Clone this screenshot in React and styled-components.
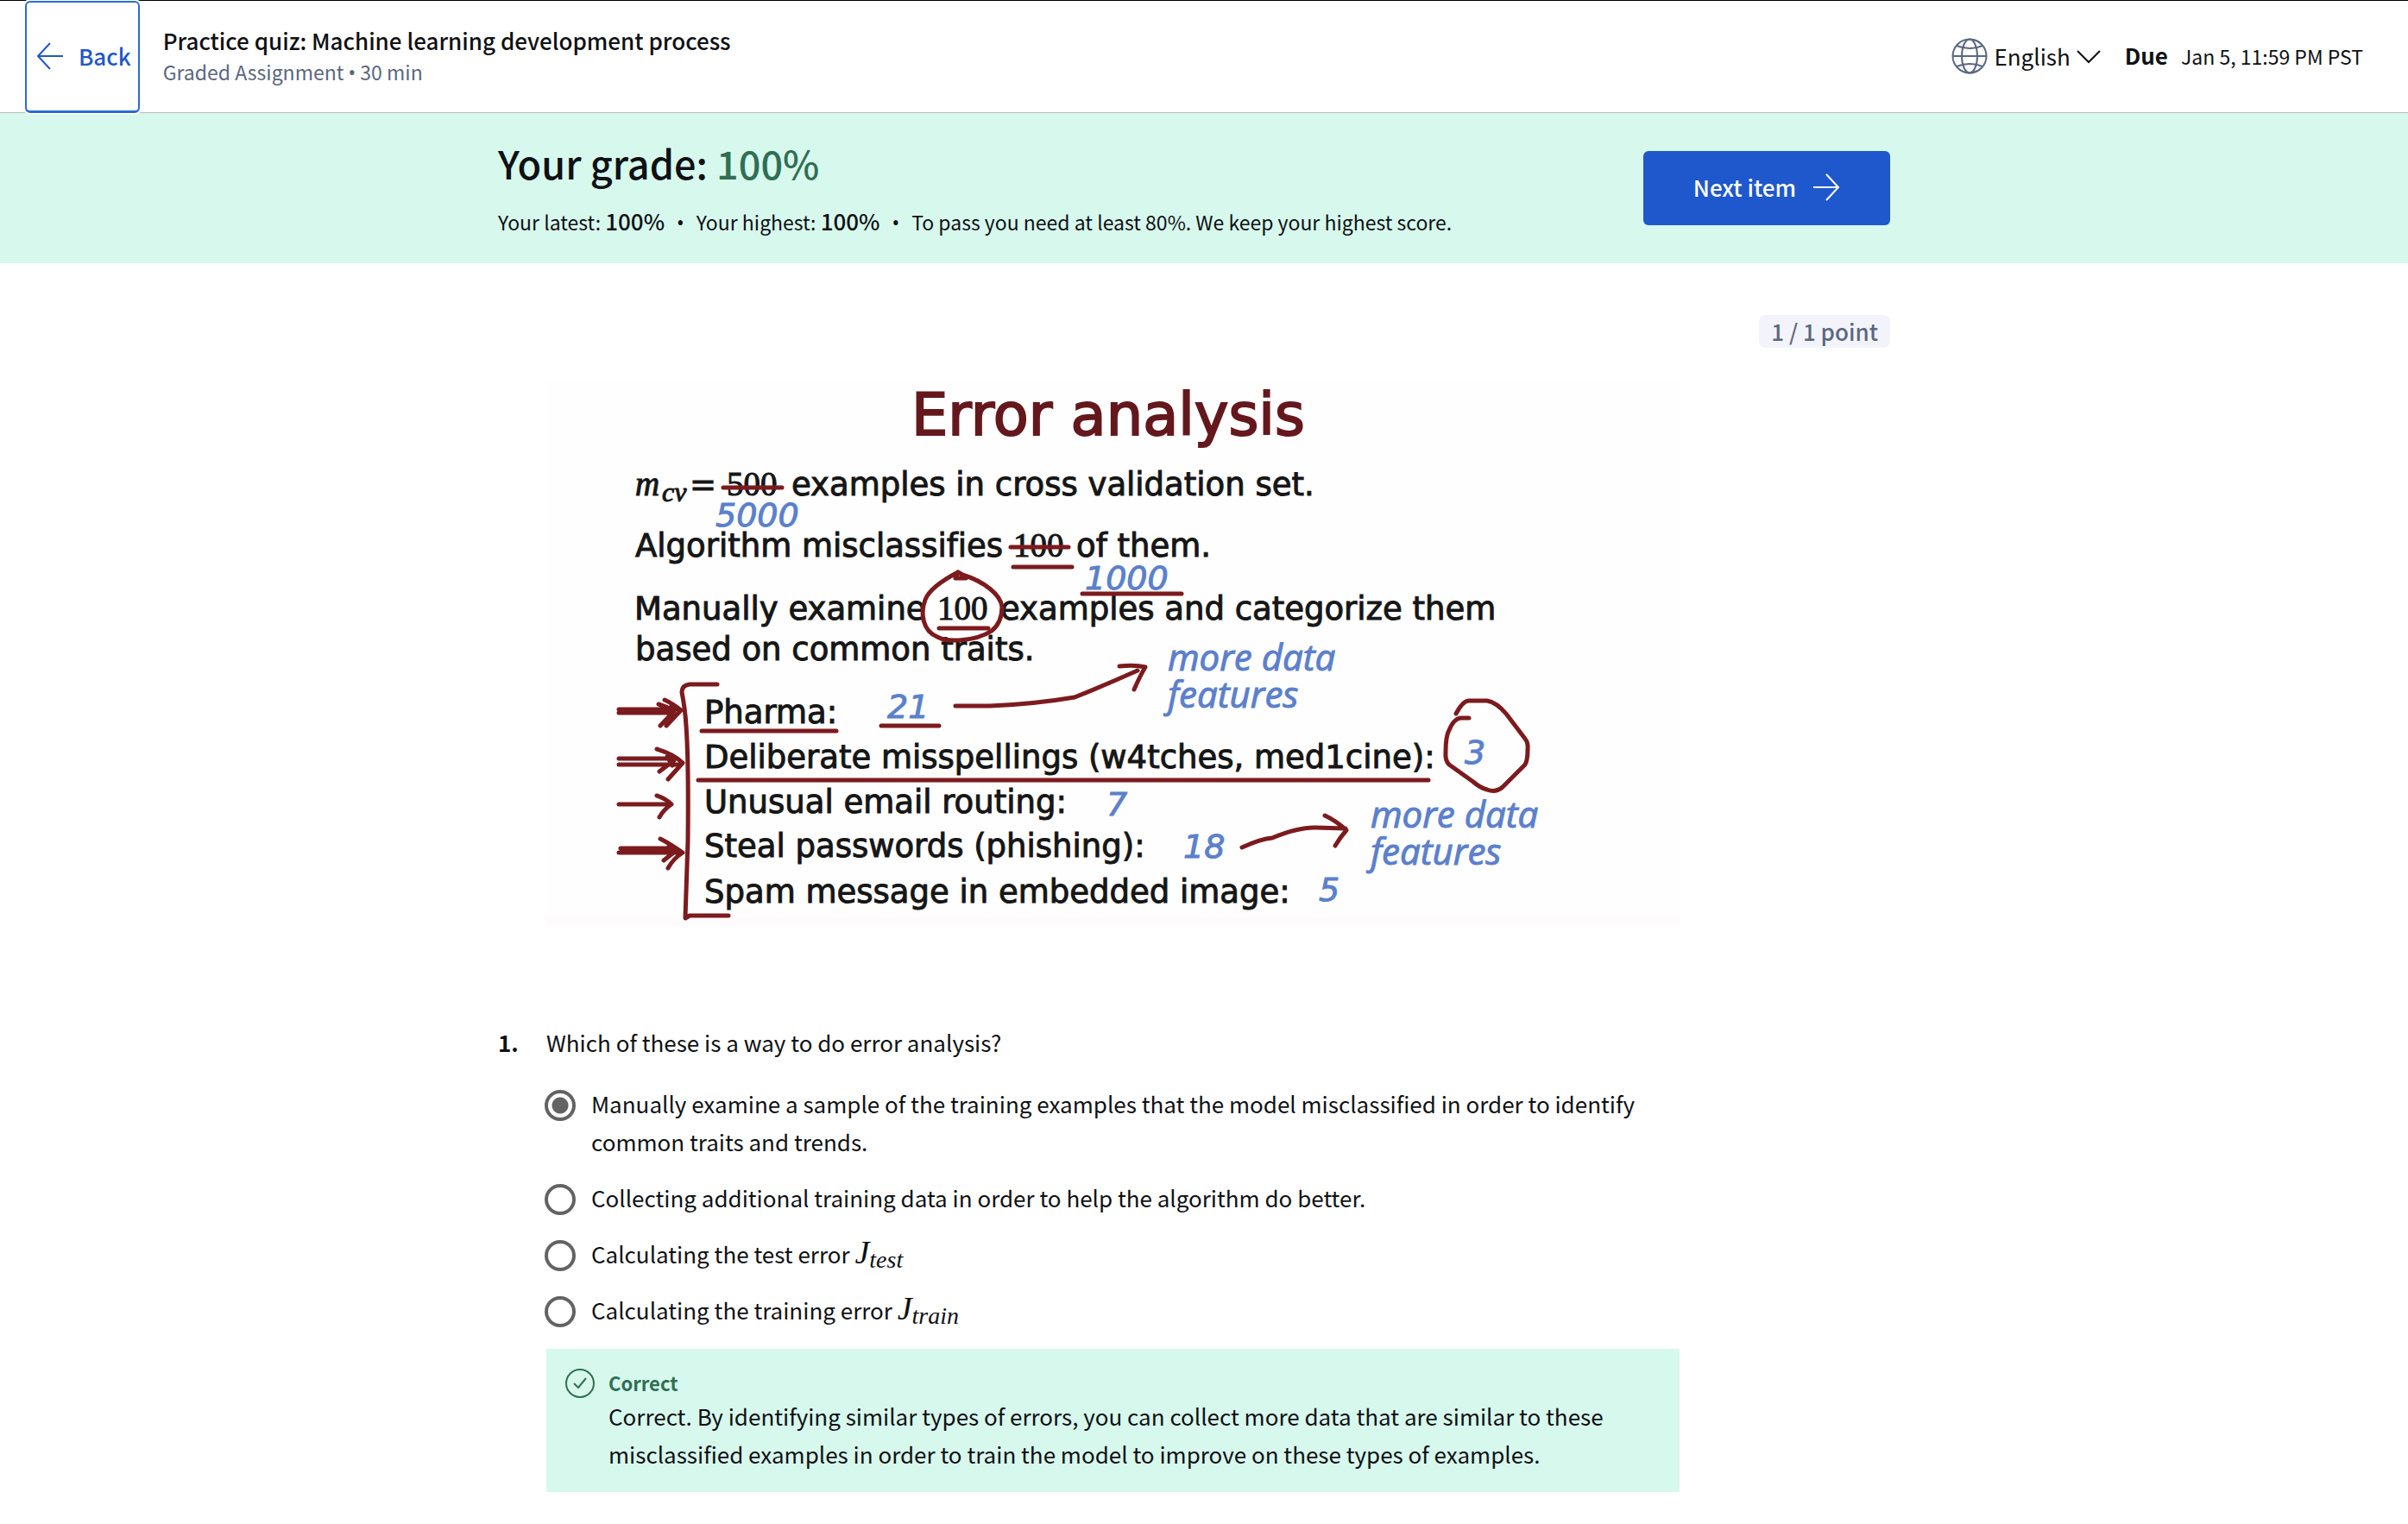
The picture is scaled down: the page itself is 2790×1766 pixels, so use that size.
import React, { useState } from "react";
import styled, { createGlobalStyle } from "styled-components";

const sans = `"Noto Sans CJK SC", "Noto Sans", sans-serif`;
const ink = "#0f1114";
const slate = "#5b6780";
const blue = "#1f58cc";
const mint = "#d7f8ed";
const green = "#2f6f53";

const GlobalStyle = createGlobalStyle`
  * { box-sizing: border-box; }
  body { margin: 0; background: #fff; color: ${ink}; font-family: ${sans}; font-size: 26px; line-height: 44px; }
  h1, h2, p, figure, fieldset { margin: 0; padding: 0; border: 0; font-weight: 400; }
  button, select { font: inherit; color: inherit; }
`;

const Header = styled.header`
  display: flex;
  align-items: center;
  min-height: 131px;
  padding: 0 52px 0 29px;
  border-top: 1px solid #000;
  box-shadow: inset 0 -1px #bbb;
`;

const BackButton = styled.button`
  position: relative;
  align-self: stretch;
  display: flex;
  align-items: center;
  gap: 17px;
  padding: 0 8px 2px 11px;
  border: 2px solid #2a6bd6;
  border-bottom-width: 3px;
  border-radius: 6px;
  background: #fff;
  box-shadow: 0 0 0 2px #fff;
  color: ${blue};
  font-weight: 500;
`;

const Heading = styled.div`
  flex: 1;
  padding: 0 0 3px 27px;
`;

const QuizTitle = styled.h1`
  font-size: 26px;
  line-height: 36px;
  font-weight: 500;
`;

const QuizMeta = styled.p`
  font-size: 23px;
  line-height: 36px;
  color: ${slate};
`;

const Bullet = styled.span`
  margin: 0 ${(p) => (p.$wide ? 14 : 0)}px;
  font-family: "Noto Sans", sans-serif;
  line-height: 1;
`;

const Tools = styled.div`
  display: flex;
  align-items: center;
  gap: 28px;
  padding-bottom: 3px;
`;

const Language = styled.label`
  display: flex;
  align-items: center;
  gap: 7px;
`;

const LanguageSelect = styled.select`
  appearance: none;
  field-sizing: content;
  padding: 0;
  border: 0;
  background: none;
`;

const Due = styled.p`
  display: flex;
  align-items: baseline;
  gap: 15px;
  font-size: 23px;
`;

const Strong = styled.strong`
  font-size: 26px;
  line-height: 1;
  font-weight: ${(p) => (p.$heavy ? 700 : 500)};
`;

const Banner = styled.section`
  padding: 30px 23px 30px 0;
  background: ${mint};
`;

const Container = styled.div`
  display: flex;
  flex-direction: ${(p) => (p.$column ? "column" : "row")};
  align-items: ${(p) => (p.$column ? "stretch" : "center")};
  justify-content: space-between;
  max-width: 1613px;
  margin: 0 auto;
`;

const Grade = styled.h2`
  margin-bottom: 22px;
  font-size: 45px;
  line-height: 56px;
  font-weight: 500;
`;

const GradeValue = styled.span`
  color: ${green};
`;

const Scores = styled.p`
  font-size: 23px;
  line-height: 36px;
`;

const NextButton = styled.button`
  display: flex;
  align-items: center;
  gap: 19px;
  padding: 20px 58px 22px;
  border: 0;
  border-radius: 6px;
  background: ${blue};
  color: #fff;
  font-weight: 500;
`;

const Main = styled.main`
  padding: 60px 23px 36px 0;
`;

const Points = styled.p`
  align-self: flex-end;
  padding: 0 14px;
  border-radius: 8px;
  background: #f3f4fb;
  color: ${slate};
  line-height: 38px;
  font-weight: 500;
`;

const Body = styled.div`
  margin: 0 244px 0 56px;
`;

const Slide = styled.figure`
  margin: 38px 0 113px;
  background: #fefefe;
  svg { display: block; width: 100%; height: auto; }
`;

const Question = styled.fieldset`
  min-width: 0;
`;

const Prompt = styled.legend`
  display: flex;
  margin: 0 0 27px -56px;
  padding: 0;
`;

const Number = styled.span`
  width: 56px;
  font-weight: 700;
`;

const Options = styled.div`
  display: grid;
  gap: 21px;
  margin-bottom: 23px;
`;

const Option = styled.label`
  display: flex;
  align-items: flex-start;
  gap: 18px;
  margin-left: -2px;
`;

const Radio = styled.input`
  appearance: none;
  flex: none;
  width: 36px;
  height: 36px;
  margin: 6px 0 0;
  border: 4px solid #636363;
  border-radius: 50%;
  background: #fff;
  &:checked { background: radial-gradient(circle, #636363 9px, #fff 10px); }
`;

const MathVar = styled.i`
  font-family: "Liberation Serif", serif;
  font-size: 38px;
  line-height: 1;
  sub { font-size: 28px; line-height: 1; vertical-align: -5px; }
`;

const Feedback = styled.section`
  display: flex;
  gap: 16px;
  padding: 22px;
  background: ${mint};
`;

const StatusIcon = styled.div`
  flex: none;
  margin-top: 1px;
  color: ${green};
  svg { display: block; }
`;

const Verdict = styled.h2`
  font-size: 22px;
  line-height: 34px;
  font-weight: 700;
  color: ${green};
`;

const Icon = ({ size = 32, width = 2, children, viewBox = "0 0 32 32" }) => (
  <svg width={size} height={size} viewBox={viewBox} fill="none" stroke="currentColor" strokeWidth={width} aria-hidden="true">
    {children}
  </svg>
);

const GlobeIcon = styled.svg`
  color: ${slate};
`;

const Printed = styled.g`
  font-family: "DejaVu Sans", sans-serif;
  font-size: 37px;
  font-variant-ligatures: none;
  fill: #161616;
  stroke: #161616;
  stroke-width: 1;
`;

const Serif = styled.g`
  font-family: "Liberation Serif", serif;
  font-size: 39px;
  fill: #161616;
  stroke: #161616;
  stroke-width: 1;
`;

const Written = styled.g`
  font-family: "Open Sans", "Noto Sans", sans-serif;
  font-style: italic;
  font-size: 42px;
  fill: #5b80cc;
  stroke: #5b80cc;
  stroke-width: 1;
`;

const WrittenNumber = styled.g`
  font-family: "DejaVu Sans", sans-serif;
  font-style: oblique;
  font-size: 38px;
  fill: #5b80cc;
  stroke: #5b80cc;
  stroke-width: 1;
`;

const Marker = styled.g`
  fill: none;
  stroke: #7c1b1e;
  stroke-width: 5;
  stroke-linecap: round;
  stroke-linejoin: round;
`;

const SlideTitle = styled.text`
  font-family: "DejaVu Sans", sans-serif;
  font-size: 67px;
  fill: #64181d;
  stroke: #64181d;
  stroke-width: 2;
`;

function ErrorAnalysisSlide() {
  return (
    <svg viewBox="0 0 1313 632" role="img" aria-label="Error analysis slide">
      <rect y="622" width="1313" height="10" fill="#fdfbfc" />
      <SlideTitle x="423" y="63">Error analysis</SlideTitle>
      <Serif>
        <text x="103" y="133" fontStyle="italic">m</text>
        <text x="134" y="140" fontStyle="italic" fontSize="32">cv</text>
        <text x="209" y="133">500</text>
        <text x="541" y="204">100</text>
        <text x="453" y="277">100</text>
      </Serif>
      <Printed>
        <text x="166" y="133">=</text>
        <text x="284" y="133">examples in cross validation set.</text>
        <text x="103" y="204">Algorithm misclassifies</text>
        <text x="614" y="204">of them.</text>
        <text x="102" y="277">Manually examine</text>
        <text x="526" y="277">examples and categorize them</text>
        <text x="103" y="324">based on common traits.</text>
        <text x="183" y="397">Pharma:</text>
        <text x="183" y="449">Deliberate misspellings (w4tches, med1cine):</text>
        <text x="183" y="501">Unusual email routing:</text>
        <text x="183" y="552">Steal passwords (phishing):</text>
        <text x="183" y="605">Spam message in embedded image:</text>
      </Printed>
      <WrittenNumber>
        <text x="196" y="169">5000</text>
        <text x="624" y="242">1000</text>
        <text x="395" y="391">21</text>
        <text x="1064" y="444">3</text>
        <text x="649" y="504">7</text>
        <text x="738" y="553">18</text>
        <text x="895" y="603">5</text>
      </WrittenNumber>
      <Written>
        <text x="720" y="336">more data</text>
        <text x="720" y="379">features</text>
        <text x="955" y="518">more data</text>
        <text x="955" y="561">features</text>
      </Written>
      <Marker>
        <path d="M205 124H273M538 193H605M541 216H609M621 247H736" />
        <path d="M455 287H512M180 406H336M388 400H455M176 463H1022" />
        <path d="M477 222C458 232 443 243 439 254C433 270 436 290 453 297C462 302 470 301 478 301C494 300 507 296 516 290C526 282 528 272 528 262C526 248 508 233 482 225L477 222L474 229H486" />
        <path d="M198 352H166Q157 353 157 361Q161 382 162 400Q165 440 164 533L161 623L166 620H211" />
        <path d="M84 381H150M84 385H146M137 370Q146 374 156 382L139 400M130 375Q140 378 148 383L132 400M145 376L146 392" />
        <path d="M84 438H148M84 445H154M128 427Q148 433 158 443L141 462M131 453L148 440M140 436L146 446" />
        <path d="M84 491H144M128 481Q138 484 145 491Q136 497 131 506" />
        <path d="M86 542H148M84 547H156M132 531Q142 536 158 547Q147 554 141 565M136 556L150 545M142 540L146 548" />
        <path d="M474 377H514Q565 375 612 367Q640 356 685 336M664 331Q682 329 694 332Q688 342 681 358" />
        <path d="M806 541Q828 531 841 530Q870 518 890 518L926 519M902 504Q915 510 927 521Q920 529 914 539" />
        <path d="M1054 386Q1062 371 1069 371H1090Q1101 373 1112 386L1134 415Q1138 420 1137 428Q1137 440 1134 445L1108 471Q1100 478 1090 474Q1082 472 1074 465L1046 445Q1041 440 1042 430Q1042 412 1046 405Q1052 391 1060 391H1069" />
      </Marker>
    </svg>
  );
}

const options = [
  "Manually examine a sample of the training examples that the model misclassified in order to identify common traits and trends.",
  "Collecting additional training data in order to help the algorithm do better.",
  <>Calculating the test error <MathVar>J<sub>test</sub></MathVar></>,
  <>Calculating the training error <MathVar>J<sub>train</sub></MathVar></>,
];

export default function App() {
  const [selected, setSelected] = useState(0);
  return (
    <>
      <GlobalStyle />
      <Header>
        <BackButton type="button">
          <Icon><path d="M31 16H2M16 1L2 16L16 31" /></Icon>
          Back
        </BackButton>
        <Heading>
          <QuizTitle>Practice quiz: Machine learning development process</QuizTitle>
          <QuizMeta>Graded Assignment <Bullet>•</Bullet> 30 min</QuizMeta>
        </Heading>
        <Tools>
          <Language>
            <GlobeIcon width="42" height="42" viewBox="0 0 42 42" fill="none" stroke="currentColor" strokeWidth="2" aria-hidden="true">
              <circle cx="21" cy="21" r="19.5" />
              <ellipse cx="21" cy="21" rx="9" ry="19.5" />
              <path d="M1.500 21H40.500M6 9Q21 15 36 9M6 33Q21 27 36 33" />
            </GlobeIcon>
            <LanguageSelect aria-label="Language" defaultValue="English">
              <option>English</option>
            </LanguageSelect>
            <Icon size={28} viewBox="0 0 28 28"><path d="M1 8L14 21L27 8" /></Icon>
          </Language>
          <Due><Strong $heavy>Due</Strong> Jan 5, 11:59 PM PST</Due>
        </Tools>
      </Header>
      <Banner>
        <Container>
          <div>
            <Grade>Your grade: <GradeValue>100%</GradeValue></Grade>
            <Scores>
              Your latest: <Strong>100%</Strong><Bullet $wide>•</Bullet>
              Your highest: <Strong>100%</Strong><Bullet $wide>•</Bullet>
              To pass you need at least 80%. We keep your highest score.
            </Scores>
          </div>
          <NextButton type="button">
            Next item
            <Icon><path d="M1 16H30M16 1L30 16L16 31" /></Icon>
          </NextButton>
        </Container>
      </Banner>
      <Main>
        <Container $column>
          <Points>1 / 1 point</Points>
          <Body>
            <Slide><ErrorAnalysisSlide /></Slide>
            <Question>
              <Prompt><Number>1.</Number>Which of these is a way to do error analysis?</Prompt>
              <Options>
                {options.map((text, i) => (
                  <Option key={i}>
                    <Radio type="radio" name="answer" checked={selected === i} onChange={() => setSelected(i)} />
                    <span>{text}</span>
                  </Option>
                ))}
              </Options>
            </Question>
            <Feedback>
              <StatusIcon>
                <Icon size={34} viewBox="0 0 34 34">
                  <circle cx="17" cy="17" r="16" />
                  <path d="M10 17L15 22L24 11" />
                </Icon>
              </StatusIcon>
              <div>
                <Verdict>Correct</Verdict>
                <p>Correct. By identifying similar types of errors, you can collect more data that are similar to these misclassified examples in order to train the model to improve on these types of examples.</p>
              </div>
            </Feedback>
          </Body>
        </Container>
      </Main>
    </>
  );
}
